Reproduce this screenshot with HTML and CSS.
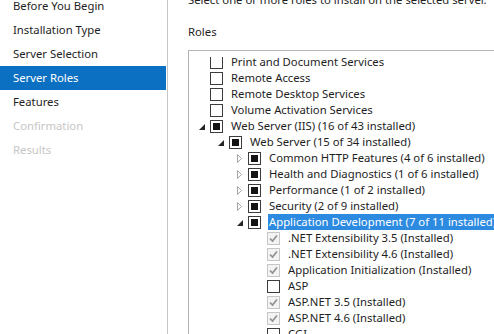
FILE: index.html
```html
<!DOCTYPE html>
<html lang="en">
<head>
<meta charset="utf-8">
<title>Add Roles and Features Wizard - Server Roles</title>
<link rel="stylesheet" href="styles.css">
</head>
<body>
<div class="wizard">
  <nav class="nav">
    <ul class="nav-list">
      <li class="nav-item">Before You Begin</li>
      <li class="nav-item">Installation Type</li>
      <li class="nav-item">Server Selection</li>
      <li class="nav-item is-active">Server Roles</li>
      <li class="nav-item">Features</li>
      <li class="nav-item is-disabled">Confirmation</li>
      <li class="nav-item is-disabled">Results</li>
    </ul>
  </nav>
  <main class="main">
    <p class="intro">Select one or more roles to install on the selected server.</p>
    <h2 class="section-title">Roles</h2>
    <div class="tree">
      <div class="viewport">
        <ul class="tree-list">
          <li class="row lvl0"><span class="exp"></span><span class="cb"></span><span class="label">Print and Document Services</span></li>
          <li class="row lvl0"><span class="exp"></span><span class="cb"></span><span class="label">Remote Access</span></li>
          <li class="row lvl0"><span class="exp"></span><span class="cb"></span><span class="label">Remote Desktop Services</span></li>
          <li class="row lvl0"><span class="exp"></span><span class="cb"></span><span class="label">Volume Activation Services</span></li>
          <li class="row lvl0"><span class="exp"><svg class="tri-open" viewBox="0 0 6 6" width="6" height="6"><polygon points="6,0 6,6 0,6"/></svg></span><span class="cb ind"></span><span class="label">Web Server (IIS) (16 of 43 installed)</span></li>
          <li class="row lvl1"><span class="exp"><svg class="tri-open" viewBox="0 0 6 6" width="6" height="6"><polygon points="6,0 6,6 0,6"/></svg></span><span class="cb ind"></span><span class="label">Web Server (15 of 34 installed)</span></li>
          <li class="row lvl2"><span class="exp"><svg class="tri-closed" viewBox="0 0 5 9" width="5" height="9"><polygon points="0.5,0.5 4.5,4.5 0.5,8.5"/></svg></span><span class="cb ind"></span><span class="label">Common HTTP Features (4 of 6 installed)</span></li>
          <li class="row lvl2"><span class="exp"><svg class="tri-closed" viewBox="0 0 5 9" width="5" height="9"><polygon points="0.5,0.5 4.5,4.5 0.5,8.5"/></svg></span><span class="cb ind"></span><span class="label">Health and Diagnostics (1 of 6 installed)</span></li>
          <li class="row lvl2"><span class="exp"><svg class="tri-closed" viewBox="0 0 5 9" width="5" height="9"><polygon points="0.5,0.5 4.5,4.5 0.5,8.5"/></svg></span><span class="cb ind"></span><span class="label">Performance (1 of 2 installed)</span></li>
          <li class="row lvl2"><span class="exp"><svg class="tri-closed" viewBox="0 0 5 9" width="5" height="9"><polygon points="0.5,0.5 4.5,4.5 0.5,8.5"/></svg></span><span class="cb ind"></span><span class="label">Security (2 of 9 installed)</span></li>
          <li class="row lvl2 is-selected"><span class="exp"><svg class="tri-open" viewBox="0 0 6 6" width="6" height="6"><polygon points="6,0 6,6 0,6"/></svg></span><span class="cb ind"></span><span class="label">Application Development (7 of 11 installed)</span></li>
          <li class="row lvl3"><span class="cb chk"><svg viewBox="0 0 11 11" width="11" height="11"><polyline points="2,5.5 4.5,8 9,2.5"/></svg></span><span class="label">.NET Extensibility 3.5 (Installed)</span></li>
          <li class="row lvl3"><span class="cb chk"><svg viewBox="0 0 11 11" width="11" height="11"><polyline points="2,5.5 4.5,8 9,2.5"/></svg></span><span class="label">.NET Extensibility 4.6 (Installed)</span></li>
          <li class="row lvl3"><span class="cb chk"><svg viewBox="0 0 11 11" width="11" height="11"><polyline points="2,5.5 4.5,8 9,2.5"/></svg></span><span class="label">Application Initialization (Installed)</span></li>
          <li class="row lvl3"><span class="cb"></span><span class="label">ASP</span></li>
          <li class="row lvl3"><span class="cb chk"><svg viewBox="0 0 11 11" width="11" height="11"><polyline points="2,5.5 4.5,8 9,2.5"/></svg></span><span class="label">ASP.NET 3.5 (Installed)</span></li>
          <li class="row lvl3"><span class="cb chk"><svg viewBox="0 0 11 11" width="11" height="11"><polyline points="2,5.5 4.5,8 9,2.5"/></svg></span><span class="label">ASP.NET 4.6 (Installed)</span></li>
          <li class="row lvl3"><span class="cb"></span><span class="label">CGI</span></li>
        </ul>
      </div>
    </div>
  </main>
</div>
</body>
</html>
```
FILE: styles.css
```css
html, body {
  margin: 0;
  padding: 0;
  background: #ffffff;
  overflow: hidden;
}

body {
  width: 494px;
  height: 334px;
  font-family: "Noto Sans", "Open Sans", "Liberation Sans", sans-serif;
  font-size: 11.3px;
  color: #1e1e1e;
}

.wizard {
  display: flex;
  height: 334px;
}

.nav {
  width: 167px;
  flex: 0 0 167px;
  border-right: 1px solid #c4c4c4;
  overflow: hidden;
}

.nav-list {
  list-style: none;
  margin: -6px 0 0 0;
  padding: 0;
}

.nav-item {
  height: 24px;
  line-height: 24px;
  padding-left: 13px;
  margin-right: 1px;
  white-space: nowrap;
  color: #1e1e1e;
}

.nav-item.is-active {
  background: #0c70c2;
  color: #ffffff;
}

.nav-item.is-disabled {
  color: #c6c6c6;
}

.main {
  flex: 1;
  padding-left: 20px;
  overflow: hidden;
}

.intro {
  margin: -8px 0 0 0;
  line-height: 16px;
  white-space: nowrap;
  color: #1e1e1e;
}

.section-title {
  margin: 16px 0 0 0;
  font-size: 11.3px;
  font-weight: normal;
  line-height: 16px;
  color: #1e1e1e;
}

.tree {
  margin-top: 10px;
  width: 400px;
  height: 400px;
  border-top: 1px solid #b4b4b4;
  border-left: 1px solid #b4b4b4;
  padding-top: 6px;
}

.viewport {
  height: 100%;
  overflow: hidden;
}

.tree-list {
  list-style: none;
  margin: -3px 0 0 0;
  padding: 0;
}

.row {
  display: flex;
  align-items: flex-start;
  height: 16px;
  line-height: 16px;
  white-space: nowrap;
}

.lvl0 { padding-left: 10px; }
.lvl1 { padding-left: 29px; }
.lvl2 { padding-left: 48px; }
.lvl3 { padding-left: 78px; }

.exp {
  width: 11px;
  flex: 0 0 11px;
  height: 16px;
  display: flex;
  align-items: center;
}

.tri-open {
  fill: #262626;
  margin-top: 1px;
}

.tri-closed {
  fill: none;
  stroke: #a6a6a6;
  stroke-width: 1;
}

.cb {
  box-sizing: border-box;
  width: 13px;
  height: 13px;
  flex: 0 0 13px;
  margin-top: 2px;
  border: 1px solid #3c3c3c;
  background: #ffffff;
  display: flex;
  align-items: center;
  justify-content: center;
}

.cb.ind::after {
  content: "";
  width: 7px;
  height: 7px;
  background: #141414;
}

.cb.chk {
  border-color: #c6c6c6;
  background: #f3f3f3;
}

.cb.chk polyline {
  fill: none;
  stroke: #8c8c8c;
  stroke-width: 1.6;
}

.label {
  margin-left: 7px;
  padding-left: 1px;
  padding-right: 40px;
}

.is-selected .label {
  background: #2c8ae0;
  color: #ffffff;
}
```
